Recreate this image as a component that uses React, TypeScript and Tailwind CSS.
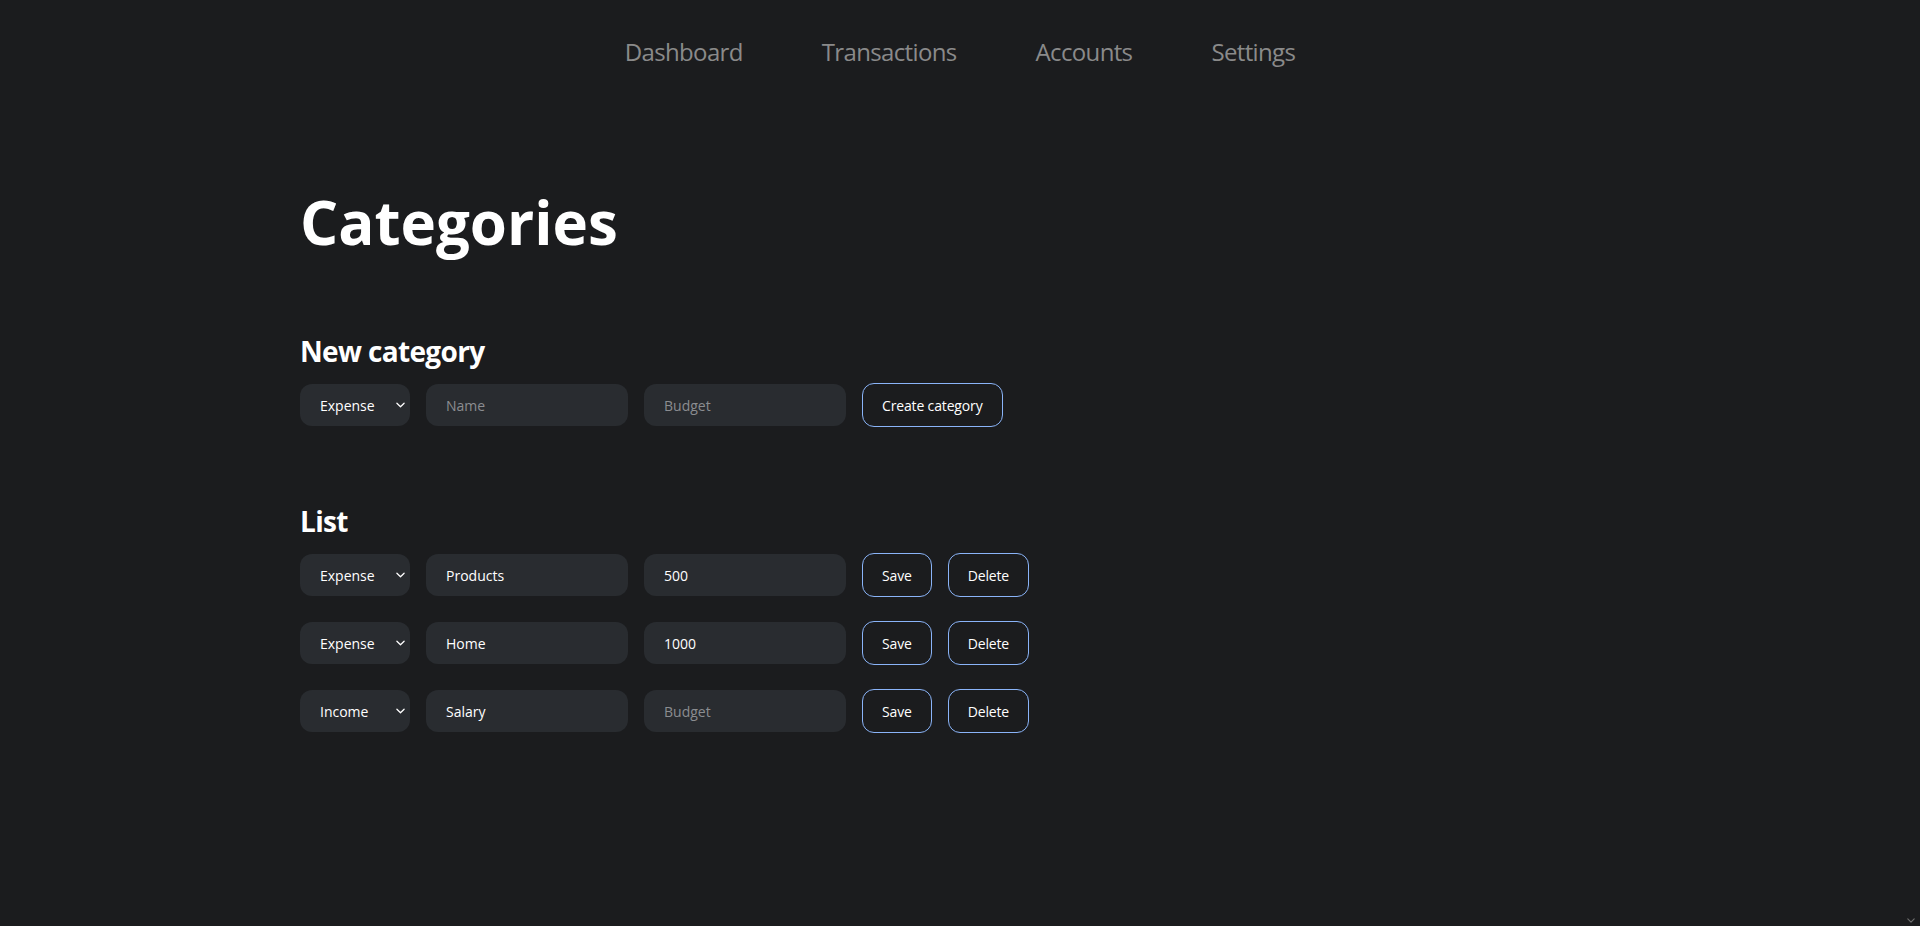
import { useState } from "react";

interface Category {
  id: number;
  type: "Expense" | "Income";
  name: string;
  budget: string;
}

const NAV_ITEMS = ["Dashboard", "Transactions", "Accounts", "Settings"];

const INITIAL: Category[] = [
  { id: 1, type: "Expense", name: "Products", budget: "500" },
  { id: 2, type: "Expense", name: "Home", budget: "1000" },
  { id: 3, type: "Income", name: "Salary", budget: "" },
];

function Chevron({ className }: { className?: string }) {
  return (
    <svg viewBox="0 0 10 6" className={className} fill="none">
      <path d="M1 1l4 4 4-4" stroke="currentColor" strokeWidth="1.4" strokeLinecap="round" strokeLinejoin="round" />
    </svg>
  );
}

function TypeSelect({ value, onChange }: { value: string; onChange: (v: string) => void }) {
  return (
    <div className="relative w-[110px] shrink-0">
      <select
        value={value}
        onChange={e => onChange(e.target.value)}
        className="h-[42px] w-full appearance-none rounded-xl bg-[#292c30] pl-5 pr-6 text-[14px] text-white outline-none"
      >
        <option value="Expense">Expense</option>
        <option value="Income">Income</option>
      </select>
      <Chevron className="pointer-events-none absolute right-[5px] top-[18px] h-[6px] w-[9px] text-white" />
    </div>
  );
}

function TextField({ value, placeholder, onChange }: { value: string; placeholder: string; onChange: (v: string) => void }) {
  return (
    <input
      value={value}
      placeholder={placeholder}
      onChange={e => onChange(e.target.value)}
      className="h-[42px] w-[202px] shrink-0 rounded-xl bg-[#292c30] px-5 text-[14px] text-white outline-none placeholder:text-[#8b8d90]"
    />
  );
}

function OutlineButton({ children, onClick }: { children: React.ReactNode; onClick?: () => void }) {
  return (
    <button
      onClick={onClick}
      className="h-[44px] shrink-0 rounded-xl border border-[#8ab4f8] px-[19px] text-[14px] tracking-[-0.15px] text-white"
    >
      {children}
    </button>
  );
}

export default function App() {
  const [categories, setCategories] = useState<Category[]>(INITIAL);
  const [draft, setDraft] = useState({ type: "Expense", name: "", budget: "" });

  const update = (id: number, patch: Partial<Category>) =>
    setCategories(list => list.map(c => (c.id === id ? { ...c, ...patch } : c)));

  return (
    <div className="min-h-screen bg-[#1b1c1e] font-['Open_Sans',sans-serif] text-white">
      {/* Навигация */}
      <nav className="flex justify-center gap-[79px] pt-9">
        {NAV_ITEMS.map(item => (
          <a key={item} href="#" className="text-[24px] leading-[32px] tracking-[-0.65px] text-[#8a8a8a]">
            {item}
          </a>
        ))}
      </nav>

      <main className="mx-auto w-[1320px]">
        <h1 className="mt-[124px] text-[60px] font-bold leading-[60px]">Categories</h1>

        {/* Новая категория */}
        <section className="mt-[83px]">
          <h2 className="mb-4 text-[28px] font-bold leading-[32px] tracking-[-0.65px]">New category</h2>
          <div className="flex items-center gap-4">
            <TypeSelect value={draft.type} onChange={v => setDraft({ ...draft, type: v })} />
            <TextField value={draft.name} placeholder="Name" onChange={v => setDraft({ ...draft, name: v })} />
            <TextField value={draft.budget} placeholder="Budget" onChange={v => setDraft({ ...draft, budget: v })} />
            <OutlineButton>Create category</OutlineButton>
          </div>
        </section>

        {/* Список */}
        <section className="mt-[78px]">
          <h2 className="mb-4 text-[28px] font-bold leading-[32px] tracking-[-0.65px]">List</h2>
          <div className="flex flex-col gap-6">
            {categories.map(c => (
              <div key={c.id} className="flex items-center gap-4">
                <TypeSelect value={c.type} onChange={v => update(c.id, { type: v as Category["type"] })} />
                <TextField value={c.name} placeholder="Name" onChange={v => update(c.id, { name: v })} />
                <TextField value={c.budget} placeholder="Budget" onChange={v => update(c.id, { budget: v })} />
                <OutlineButton>Save</OutlineButton>
                <OutlineButton onClick={() => setCategories(list => list.filter(x => x.id !== c.id))}>
                  Delete
                </OutlineButton>
              </div>
            ))}
          </div>
        </section>
      </main>

      <Chevron className="pointer-events-none fixed bottom-[3px] right-[5px] h-[5px] w-[8px] text-[#6f6f6f]" />
    </div>
  );
}
